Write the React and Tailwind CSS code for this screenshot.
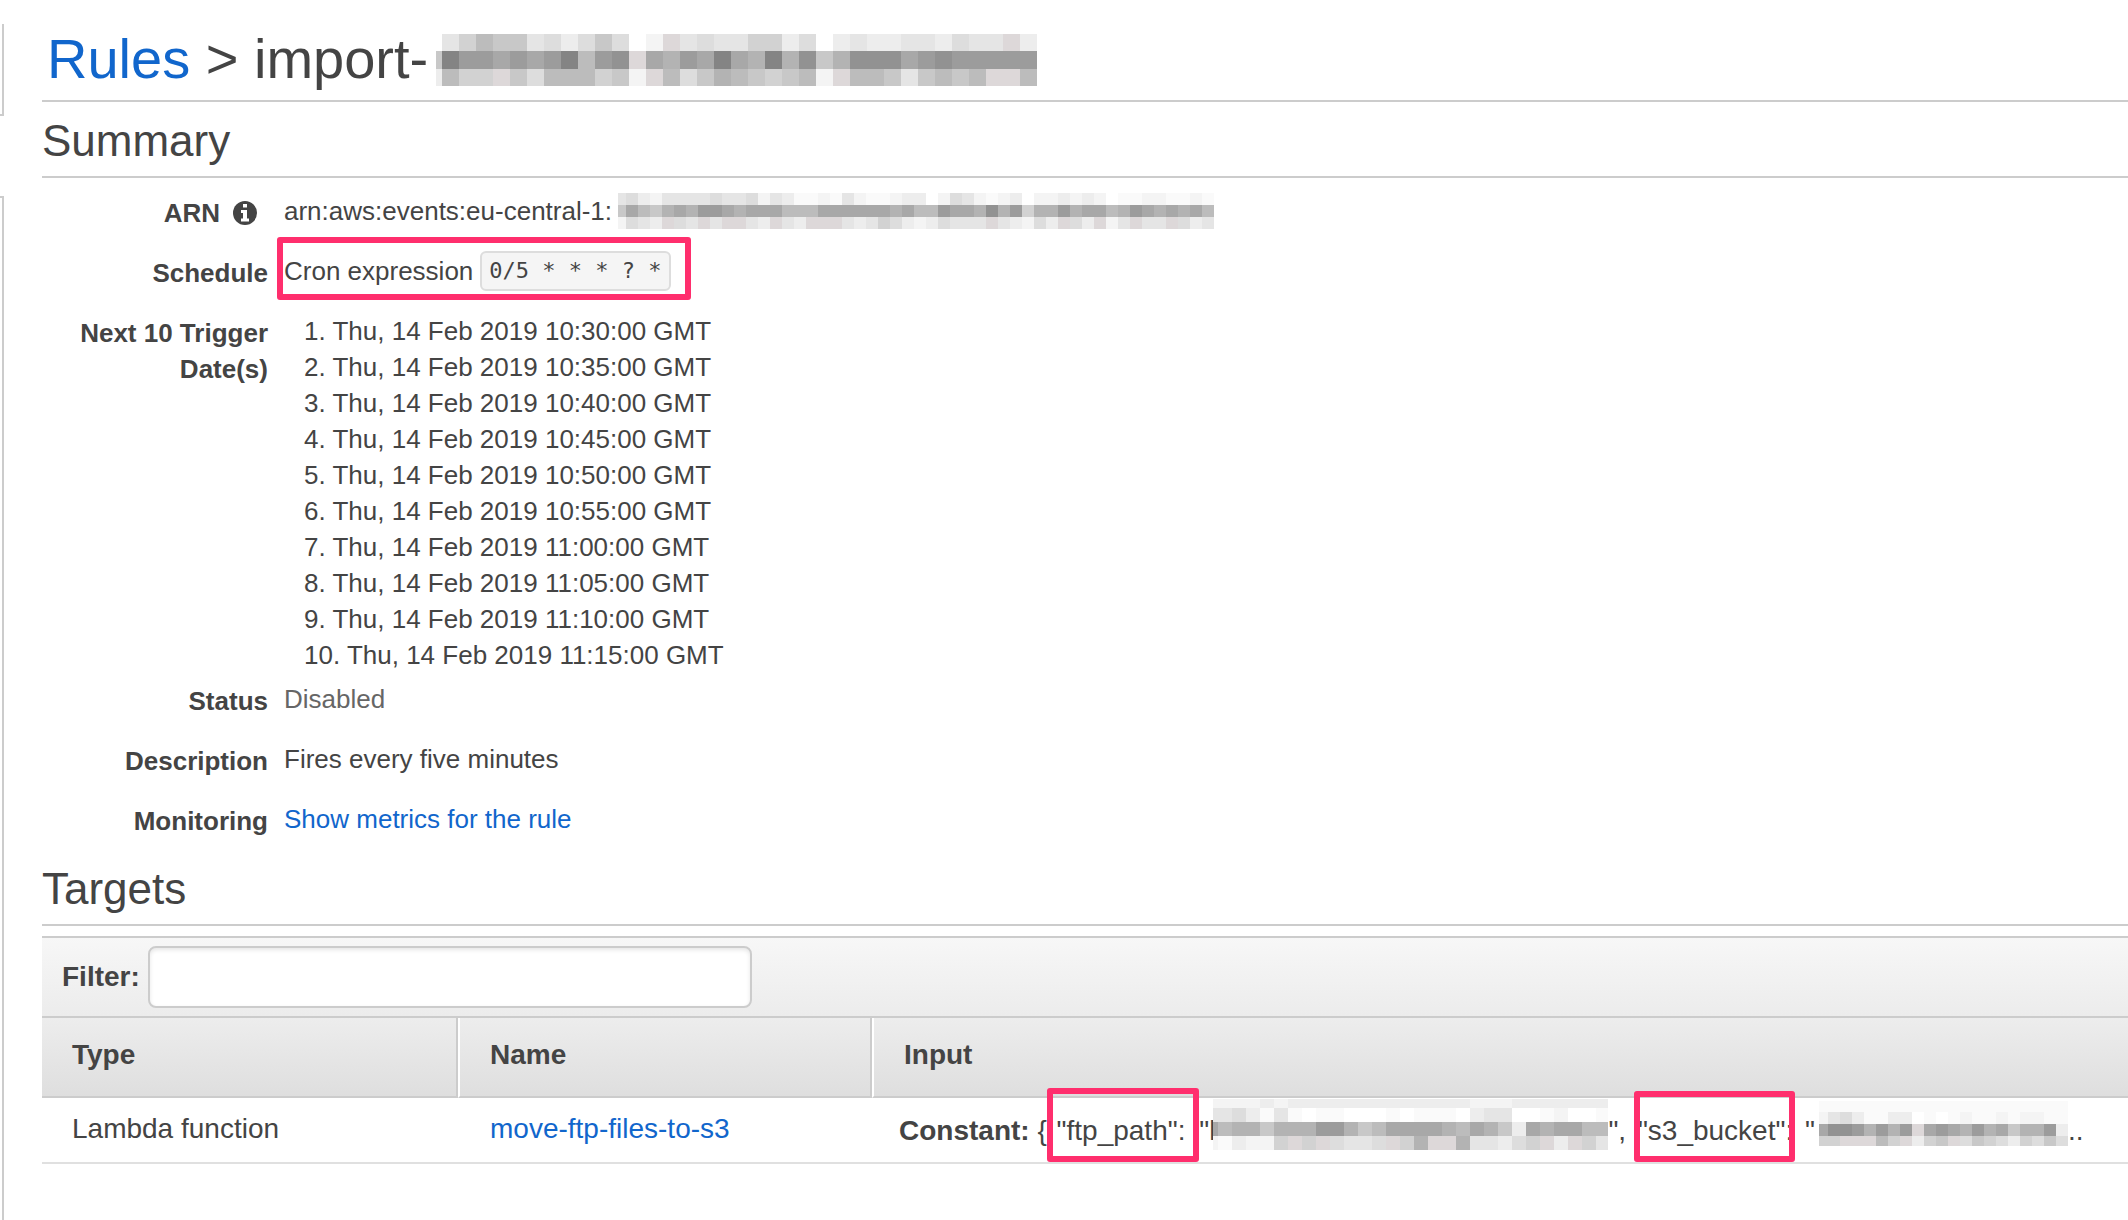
const SHADES = {
  0: "#ffffff", 1: "#fafafa", 2: "#f4f4f4", 3: "#ededed", 4: "#e5e5e5", 5: "#dddddd",
  6: "#d2d2d2", 7: "#c8c8c8", 8: "#bcbcbc", 9: "#b3b3b3", a: "#a8a8a8", b: "#9c9c9c",
  c: "#929292", d: "#848484", p: "#ddd8d9",
};

/* Pixelated block that hides private text: one character per tile. */
function Mosaic({ cell, first, last, heights, rows, className }) {
  const count = rows[0].length;
  const widths = Array.from({ length: count }, (_, i) =>
    i === 0 ? first : i === count - 1 ? (last ?? cell) : cell
  );
  const xs = widths.map((_, i) => widths.slice(0, i).reduce((a, b) => a + b, 0));
  const ys = heights.map((_, i) => heights.slice(0, i).reduce((a, b) => a + b, 0));
  const width = xs[count - 1] + widths[count - 1];
  const height = heights.reduce((a, b) => a + b, 0);
  return (
    <svg
      width={width}
      height={height}
      viewBox={`0 0 ${width} ${height}`}
      shapeRendering="crispEdges"
      aria-hidden="true"
      className={className}
    >
      {rows.map((row, r) =>
        [...row].map((tile, c) => (
          <rect key={`${r}-${c}`} x={xs[c]} y={ys[r]} width={widths[c]} height={heights[r]} fill={SHADES[tile]} />
        ))
      )}
    </svg>
  );
}

const TITLE_TILES = [
  "04687745357502p454466350343344354" + "4p3",
  "7dbbababd8bcpa9bada9d9c79cccabcbb" + "bbb",
  "3866p75888672p8579876782p88747878" + "pp8",
];

const ARN_TILES = [
  "45324444544524311214211233025421230223232011221121",
  "7a879a9bba9aaa888aaaaaa9a88baa9c9b699b9aa89ba9a9a8",
  "2543p54p4pp43p43ppp434653235444p43253p53p24p44p534",
];

const FTP_TILES = [
  "22223233333333333332223333333",
  "44531410110001011103440012001",
  "a8997999bb978aaaa98a973a9aa88",
  "213226p6p5445p69pp944356p3p64",
];

const BUCKET_TILES = [
  "111111111111111111111",
  "245311330101211212211",
  "accb9b9bpaba9b9a799b3",
  "66ppp86p367p576536575",
];

const TRIGGERS = ["10:30", "10:35", "10:40", "10:45", "10:50", "10:55", "11:00", "11:05", "11:10", "11:15"];

function Heading({ children }) {
  return (
    <h2 className="border-b-2 border-[#ccc] pt-[14px] pb-[10px] text-[44px] leading-[50px] font-normal">{children}</h2>
  );
}

function Row({ label, children, className = "mb-[22px]" }) {
  return (
    <div className={`grid grid-cols-[226px_1fr] gap-x-4 ${className}`}>
      <dt className="pt-[2px] text-right font-bold">{label}</dt>
      <dd>{children}</dd>
    </div>
  );
}

function InfoIcon() {
  return (
    <svg width="24" height="24" viewBox="0 0 24 24" aria-hidden="true" className="mr-[11px] ml-[13px]">
      <circle cx="12" cy="12" r="12" fill="#444" />
      <path fill="#fff" d="M10 3h4v3.5h-4zM8 9h6v8.500h2V20.500H8v-3h2V12H8z" />
    </svg>
  );
}

const MARK = "pointer-events-none absolute rounded-[3px] border-[6px] border-[#ff2e6d]";

export default function App() {
  return (
    <div className="flex min-h-screen overflow-hidden bg-white font-['Liberation_Sans',Arial,sans-serif] text-[26px] leading-9 text-[#444]">
      <aside className="flex w-1 shrink-0 flex-col gap-20 pt-6">
        <div className="h-[92px] border-r-2 border-b-2 border-[#ccc]" />
        <div className="flex-1 border-t-2 border-r-2 border-[#ccc]" />
      </aside>

      <main className="min-w-0 flex-1 pl-[38px]">
        <h1 className="flex border-b-2 border-[#ccc] pt-6 pb-[6px] pl-[5px] text-[56px] leading-[70px] font-normal whitespace-pre">
          <a href="#rules" className="text-[#1166cc]">Rules</a>
          <span>{" > import-"}</span>
          <Mosaic cell={17} first={6} heights={[17, 18, 17]} rows={TITLE_TILES} className="mt-[10px] ml-2 shrink-0" />
        </h1>

        <section>
          <Heading>Summary</Heading>
          <dl className="pt-[15px] pb-[13px]">
            <Row
              label={
                <span className="flex items-center justify-end">
                  ARN
                  <InfoIcon />
                </span>
              }
            >
              <span className="flex">
                arn:aws:events:eu-central-1:
                <Mosaic cell={12} first={8} heights={[12, 12, 12]} rows={ARN_TILES} className="ml-[6px] shrink-0" />
              </span>
            </Row>
            <Row label="Schedule">
              <span className="relative inline-flex items-start gap-[7px]">
                Cron expression
                <code className="-my-[2px] rounded-md border-2 border-[#ddd] bg-[#f5f5f5] px-[7px] font-['DejaVu_Sans_Mono',monospace] text-[22px] leading-9">
                  0/5 * * * ? *
                </code>
                <span className={`${MARK} -top-4 -right-5 -bottom-[11px] -left-[7px]`} />
              </span>
            </Row>
            <Row label="Next 10 Trigger Date(s)" className="mb-2">
              <ol className="pl-5">
                {TRIGGERS.map((time, i) => (
                  <li key={time}>{`${i + 1}. Thu, 14 Feb 2019 ${time}:00 GMT`}</li>
                ))}
              </ol>
            </Row>
            <Row label="Status">
              <span className="text-[#666]">Disabled</span>
            </Row>
            <Row label="Description">Fires every five minutes</Row>
            <Row label="Monitoring" className="-mb-[2px]">
              <a href="#metrics" className="text-[#1166cc]">Show metrics for the rule</a>
            </Row>
          </dl>
        </section>

        <section className="text-[28px] leading-9">
          <Heading>Targets</Heading>
          <div className="mt-[10px] flex items-center gap-2 border-y-2 border-[#ccc] bg-linear-to-b from-[#f7f7f7] to-[#ececec] py-2 pl-5">
            <label htmlFor="filter" className="font-bold">Filter:</label>
            <input
              id="filter"
              type="text"
              className="h-[62px] w-[604px] rounded-lg border-2 border-[#ccc] bg-white px-3 shadow-[inset_0_2px_4px_rgba(0,0,0,0.1)] outline-none"
            />
          </div>
          <table className="w-full table-fixed border-separate border-spacing-0 text-left">
            <colgroup>
              <col className="w-[416px]" />
              <col className="w-[414px]" />
              <col />
            </colgroup>
            <thead>
              <tr className="bg-linear-to-b from-[#ededed] to-[#dedede]">
                <th className="border-r-2 border-b-2 border-[#ccc] pt-[19px] pb-[23px] pl-[30px]">Type</th>
                <th className="border-r-2 border-b-2 border-l-2 border-[#ccc] border-l-white pt-[19px] pb-[23px] pl-[30px]">Name</th>
                <th className="border-b-2 border-l-2 border-[#ccc] border-l-white pt-[19px] pb-[23px] pl-[30px]">Input</th>
              </tr>
            </thead>
            <tbody>
              <tr className="align-top">
                <td className="border-b-2 border-[#e0e0e0] pt-[13px] pb-[15px] pl-[30px]">Lambda function</td>
                <td className="border-b-2 border-[#e0e0e0] pt-[13px] pb-[15px] pl-8">
                  <a href="#function" className="text-[#1166cc]">move-ftp-files-to-s3</a>
                </td>
                <td className="border-b-2 border-[#e0e0e0] pl-[27px]">
                  <div className="flex pt-[15px] whitespace-pre">
                    <strong>Constant:</strong>
                    <span className="pr-[2px]">{" { "}</span>
                    <span className="relative pr-[6px]">
                      {"\"ftp_path\": "}
                      <span className={`${MARK} -top-[25px] right-0 -bottom-3 -left-[10px]`} />
                    </span>
                    <span>{"\"l"}</span>
                    <Mosaic cell={14} first={5} last={12} heights={[9, 14, 14, 14]} rows={FTP_TILES} className="-mt-[14px] -ml-[2px] shrink-0" />
                    <span className="pr-1">{"\", "}</span>
                    <span className="relative pr-1">
                      {"\"s3_bucket\": "}
                      <span className={`${MARK} -top-[22px] right-[10px] -bottom-3 -left-1`} />
                    </span>
                    <span>{"\""}</span>
                    <Mosaic cell={12} first={9} heights={[11, 12, 12, 10]} rows={BUCKET_TILES} className="-mt-3 ml-1 shrink-0" />
                    <span>..</span>
                  </div>
                </td>
              </tr>
            </tbody>
          </table>
        </section>
      </main>
    </div>
  );
}
